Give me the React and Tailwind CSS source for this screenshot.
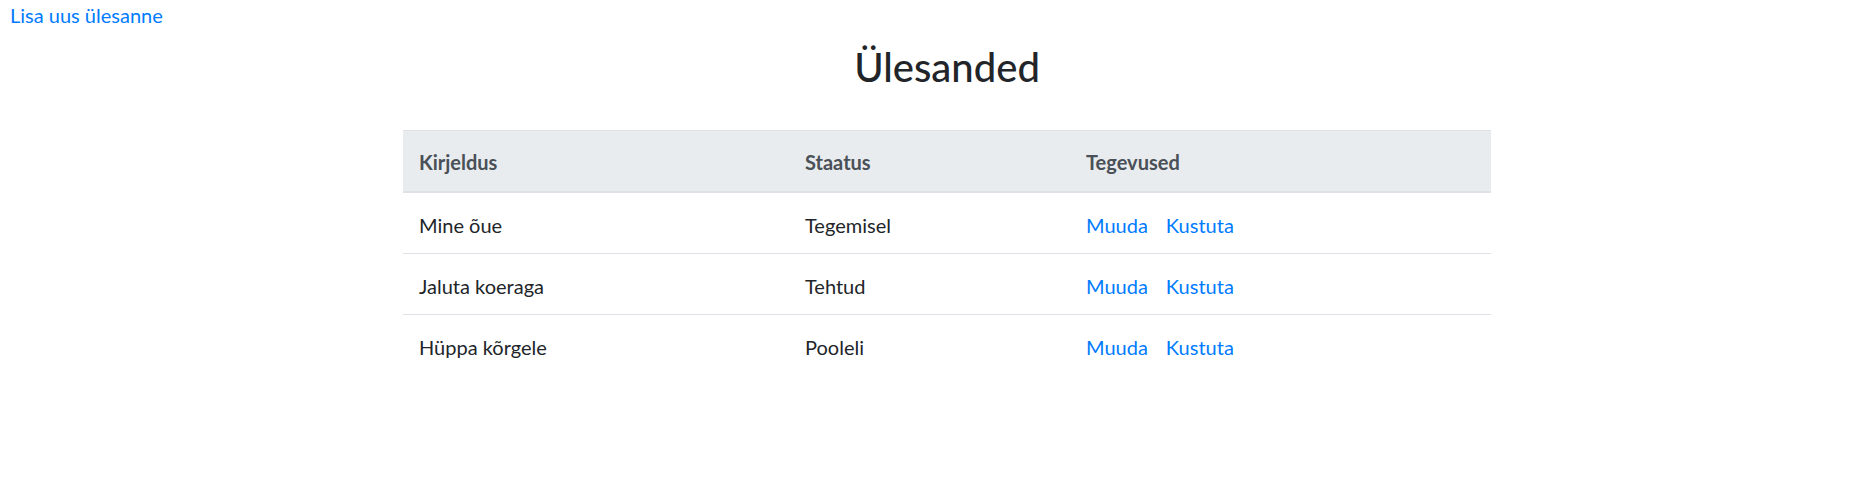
const tasks = [
  { text: 'Mine õue', status: 'Tegemisel' },
  { text: 'Jaluta koeraga', status: 'Tehtud' },
  { text: 'Hüppa kõrgele', status: 'Pooleli' },
]

export default function App() {
  return (
    <div className="min-h-screen bg-white text-[20px] leading-[30px] text-[#212529]" style={{ fontFamily: 'Lato, "Noto Sans", sans-serif' }}>
      <a href="#" className="ml-[10px] text-[#007bff]">Lisa uus ülesanne</a>

      <div className="mx-auto w-[1088px] translate-x-[12px]">
        <h1 className="mt-[13px] mb-[39px] text-center text-[40px] font-medium leading-[48px] text-[#212529]">Ülesanded</h1>

        <table className="w-full border-collapse text-left">
          <thead>
            <tr className="bg-[#e9ecef] text-[#495057]">
              <th className="w-[387px] border-t border-b-2 border-[#dee2e6] px-[16px] pt-[16px] pb-[14px] font-bold">Kirjeldus</th>
              <th className="w-[281px] border-t border-b-2 border-[#dee2e6] px-[15px] pt-[16px] pb-[14px] font-bold">Staatus</th>
              <th className="border-t border-b-2 border-[#dee2e6] px-[15px] pt-[16px] pb-[14px] font-bold">Tegevused</th>
            </tr>
          </thead>
          <tbody>
            {tasks.map((t, i) => (
              <tr key={i}>
                <td className={`px-[16px] pt-[17px] pb-[13px] ${i > 0 ? 'border-t border-[#dee2e6]' : ''}`}>{t.text}</td>
                <td className={`px-[15px] pt-[17px] pb-[13px] ${i > 0 ? 'border-t border-[#dee2e6]' : ''}`}>{t.status}</td>
                <td className={`px-[15px] pt-[17px] pb-[13px] ${i > 0 ? 'border-t border-[#dee2e6]' : ''}`}>
                  <a href="#" className="mr-[18px] text-[#007bff]">Muuda</a>
                  <a href="#" className="text-[#007bff]">Kustuta</a>
                </td>
              </tr>
            ))}
          </tbody>
        </table>
      </div>
    </div>
  )
}
